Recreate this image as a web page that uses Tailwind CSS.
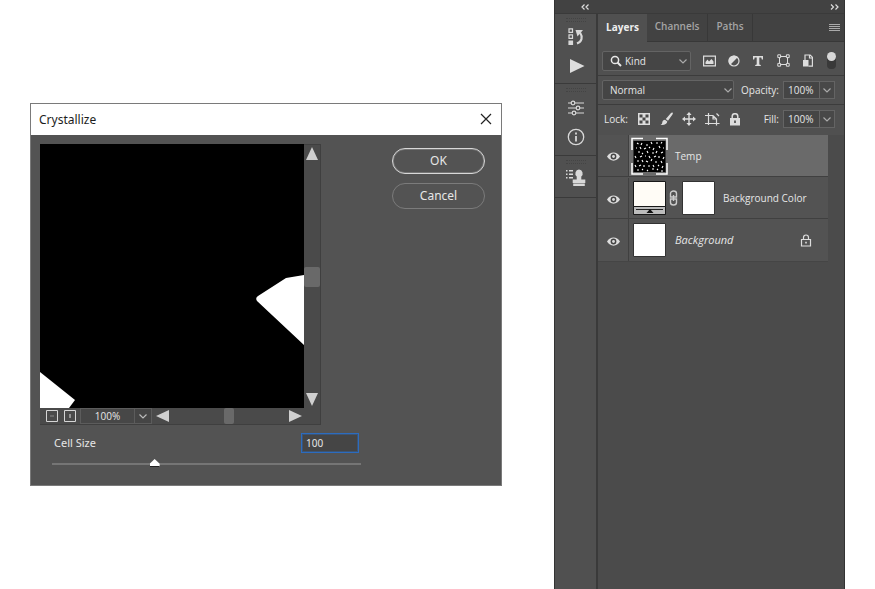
<!DOCTYPE html>
<html lang="en">
<head>
<meta charset="utf-8">
<title>Crystallize</title>
<script src="https://cdn.jsdelivr.net/npm/@tailwindcss/browser@4"></script>
</head>
<body class="bg-white font-['Open_Sans','Noto_Sans',sans-serif] text-[10px] text-[#e6e6e6]">
<main class="flex min-h-screen items-stretch gap-[52px] px-[30px]">

  <section aria-labelledby="dlg-title" class="mt-[103px] flex-1 self-start border border-[#7a7a7a] bg-[#535353]">
    <header class="flex h-[31px] items-center justify-between bg-white pl-2 pr-[9px] text-[#1c1c1c]">
      <h1 id="dlg-title" class="font-['Noto_Sans',sans-serif] text-xs">Crystallize</h1>
      <button type="button" aria-label="Close" class="pb-0.5"><svg class="block" width="12" height="12" viewBox="0 0 12 12" fill="none" stroke="#222" stroke-width="1.2"><path d="M1 1l10 10M11 1L1 11"/></svg></button>
    </header>
    <div class="flex gap-[31px] pb-4 pl-[9px] pr-4 pt-[9px]">
      <div class="min-w-0 flex-1">
        <div class="mr-10 border-b border-r border-[#3f3f3f] bg-[#4a4a4a]">
          <div class="flex">
            <svg class="block min-w-0 flex-1 bg-black" viewBox="0 0 264 264" role="img" aria-label="Preview"><path fill="#fff" d="M264 131l-18 3-28 18q-3 2-1 5l47 44zM0 228l35 28-6 8H0z"/></svg>
            <div class="flex w-4 flex-col items-center justify-between border-t border-[#3f3f3f] py-0.5">
              <button type="button" aria-label="Scroll up"><svg class="block" width="12" height="13"><path fill="#d0d0d0" d="M6 0l6 13H0z"/></svg></button>
              <div class="h-5 w-4 rounded-xs bg-[#696969]"></div>
              <button type="button" aria-label="Scroll down"><svg class="block" width="12" height="13"><path fill="#d0d0d0" d="M0 0h12L6 13z"/></svg></button>
            </div>
          </div>
          <div class="flex h-4 items-center">
            <button type="button" aria-label="Zoom out" class="ml-1.5"><svg class="block" width="12" height="12" fill="none" stroke="#d5d5d5"><path d="M.5.5h11v11H.5z"/><path stroke="#8a8a8a" d="M4 6h4"/></svg></button>
            <button type="button" aria-label="Zoom in" class="ml-1.5"><svg class="block" width="12" height="12" fill="none" stroke="#d5d5d5"><path d="M.5.5h11v11H.5z"/><path d="M6 4v4"/><path stroke="#999" d="M5 6h2"/></svg></button>
            <input aria-label="Zoom" value="100%" class="ml-1 h-4 w-[55px] border border-[#5c5c5c] bg-[#474747] text-center text-[10px] leading-none">
            <button type="button" aria-label="Zoom presets" class="flex h-4 w-[17px] items-center justify-center border border-l-0 border-[#5c5c5c] bg-[#454545]"><svg width="8" height="5" fill="none" stroke="#bbb" stroke-width="1.2"><path d="M.5.5L4 4 7.500.5"/></svg></button>
            <div class="flex flex-1 items-center justify-between pl-1 pr-[18px]">
              <button type="button" aria-label="Scroll left"><svg class="block" width="13" height="12"><path fill="#d0d0d0" d="M0 6l13-6v12z"/></svg></button>
              <div class="h-4 w-2.5 rounded-xs bg-[#696969]"></div>
              <button type="button" aria-label="Scroll right"><svg class="block" width="13" height="12"><path fill="#d0d0d0" d="M13 6L0 0v12z"/></svg></button>
            </div>
          </div>
        </div>
        <div class="mt-2 flex items-center justify-between pl-3.5 pr-0.5">
          <label for="cell" class="font-['Noto_Sans',sans-serif] text-[11px]">Cell Size</label>
          <input id="cell" value="100" class="h-5 w-[58px] border border-[#2c6cbf] bg-[#454545] px-1 font-['Noto_Sans',sans-serif] text-[10px] ring-1 ring-inset ring-[#2c6cbf]/40">
        </div>
        <input type="range" aria-label="Cell size" min="3" max="300" value="100" class="ml-3 mt-1.5 block h-2.5 w-[calc(100%-12px)] appearance-none bg-transparent [&::-webkit-slider-runnable-track]:h-0.5 [&::-webkit-slider-runnable-track]:bg-[#757575] [&::-webkit-slider-thumb]:-mt-1 [&::-webkit-slider-thumb]:h-2 [&::-webkit-slider-thumb]:w-2.5 [&::-webkit-slider-thumb]:appearance-none [&::-webkit-slider-thumb]:border-b [&::-webkit-slider-thumb]:border-[#222] [&::-webkit-slider-thumb]:bg-white [&::-webkit-slider-thumb]:[clip-path:polygon(50%_0,100%_60%,100%_100%,0_100%,0_60%)]">
      </div>
      <div class="flex w-[93px] flex-col gap-[9px] pt-1 font-['Noto_Sans',sans-serif] text-xs">
        <button type="button" class="h-[26px] rounded-full border border-[#d8d8d8] ring-1 ring-inset ring-white/20">OK</button>
        <button type="button" class="h-[26px] rounded-full border border-[#7b7b7b]">Cancel</button>
      </div>
    </div>
  </section>

  <aside class="flex w-[291px] flex-col border-x border-[#333] bg-[#3a3a3a]">
    <div class="flex h-[13px] items-center justify-between bg-[#424242] pl-[26px] pr-[5px]">
      <button type="button" aria-label="Expand"><svg class="block" width="8" height="6" fill="none" stroke="#ddd" stroke-width="1.2"><path d="M3.500.5L1 3l2.500 2.500M7.500.5L5 3l2.500 2.500"/></svg></button>
      <button type="button" aria-label="Collapse"><svg class="block" width="9" height="6" fill="none" stroke="#ddd" stroke-width="1.200"><path d="M1 .5L3.500 3 1 5.500M5.500.5L8 3 5.500 5.500"/></svg></button>
    </div>
    <div class="flex flex-1 gap-0.5 pt-px">
      <nav aria-label="Panels" class="flex w-[41px] flex-col bg-[#505050]">
        <div class="flex h-[70px] flex-col items-center gap-1.5 border-b border-[#3a3a3a] pt-1">
          <div class="h-1 w-5 border-y border-dotted border-[#444]"></div>
          <button type="button" aria-label="History"><svg class="block" width="18" height="18" fill="none" stroke="#d8d8d8" stroke-width="1.2"><path d="M2 .8h3.500v3.500H2zM2 6.800h3.500v3.500H2z"/><path fill="#d8d8d8" d="M2 13h3.500v3.500H2z"/><path stroke-width="2.200" d="M10 15.500c5-2 6-6.500 3-11"/><path fill="#d8d8d8" stroke="none" d="M8.500 2H16l-5.500 6.500z"/></svg></button>
          <button type="button" aria-label="Actions" class="ml-0.5 mt-1.5"><svg class="block" width="16" height="16"><path fill="#dedede" d="M1 1l14.500 7L1 15z"/></svg></button>
        </div>
        <div class="flex h-[72px] flex-col items-center border-b border-[#3a3a3a] pt-1">
          <div class="mb-[7px] h-1 w-5 border-y border-dotted border-[#444]"></div>
          <button type="button" aria-label="Properties"><svg class="block" width="18" height="18" fill="none" stroke="#d8d8d8" stroke-width="1.2"><path d="M1 4h3M8 4h9M1 9h8M13 9h4M1 14h4M9 14h8"/><circle cx="6" cy="4" r="1.800"/><circle cx="11" cy="9" r="1.800"/><circle cx="7" cy="14" r="1.800"/></svg></button>
          <button type="button" aria-label="Info" class="mt-[11px]"><svg class="block" width="18" height="18" fill="none" stroke="#d8d8d8" stroke-width="1.300"><circle cx="9" cy="9" r="7.700"/><path stroke-width="1.800" d="M9 8v5.500M9 4.500v2"/></svg></button>
        </div>
        <div class="flex h-[42px] flex-col items-center border-b border-[#3a3a3a] pt-1">
          <div class="mb-1 h-1 w-5 border-y border-dotted border-[#444]"></div>
          <button type="button" aria-label="Clone source"><svg class="block" width="22" height="20" fill="#d8d8d8"><path d="M1 2h1.500v1.500H1zM4 2h4v1.500H4zM1 5.500h1.500V7H1zM4 5.500h4V7H4zM1 9h1.500v1.500H1zM4 9h4v1.500H4z"/><path d="M14 1.500a4 4 0 0 1 2.300 7v3h4V15H7.700v-3.500h4v-3a4 4 0 0 1 2.300-7zM8.200 15.500h11.600V18H8.200z"/></svg></button>
        </div>
      </nav>

      <section aria-label="Layers" class="flex min-w-0 flex-1 flex-col bg-[#505050]">
        <div role="tablist" class="flex h-7 items-stretch bg-[#424242] font-semibold text-[#a5a5a5]">
          <button type="button" role="tab" aria-selected="true" class="w-[49px] bg-[#505050] pb-0.5 font-bold text-[#eee]">Layers</button>
          <button type="button" role="tab" class="w-[61px] border-b border-r border-[#383838] pb-0.5">Channels</button>
          <button type="button" role="tab" class="w-[45px] border-b border-r border-[#383838] pb-0.5">Paths</button>
          <button type="button" aria-label="Panel menu" class="flex flex-1 items-center justify-end border-b border-[#383838] pr-1"><svg width="11" height="8" stroke="#aaa"><path d="M0 .5h11M0 2.500h11M0 4.500h11M0 6.500h11"/></svg></button>
        </div>

        <div class="flex h-[34px] items-center border-b border-[#3c3c3c] pl-1 pr-[7px] pt-1">
          <div class="relative w-[89px]">
            <svg class="pointer-events-none absolute left-2 top-1 z-10" width="12" height="12" fill="none" stroke="#e8e8e8" stroke-width="1.500"><circle cx="5" cy="5" r="3.600"/><path stroke-width="2" d="M7.500 7.500L11 11"/></svg>
            <select aria-label="Filter" class="block h-5 w-full appearance-none rounded-xs border border-[#646464] bg-[#454545] pl-[22px] font-medium leading-none"><option>Kind</option></select>
            <svg class="pointer-events-none absolute right-1 top-2" width="8" height="5" fill="none" stroke="#aaa" stroke-width="1.200"><path d="M.5.5L4 4 7.500.5"/></svg>
          </div>
          <div class="flex flex-1 items-center justify-between pl-3">
            <button type="button" aria-label="Pixel layers"><svg class="block" width="13" height="12" fill="none" stroke="#ddd" stroke-width="1.200"><path d="M.6 1.200h11.800v9.600H.6z"/><path fill="#ddd" stroke="none" d="M2.500 9V7l2-2.500L6 6.500 8.500 4l2 2.500V9z"/></svg></button>
            <button type="button" aria-label="Adjustment layers"><svg class="block" width="12" height="12"><circle cx="6" cy="6" r="5" fill="none" stroke="#ddd" stroke-width="1.200"/><path fill="#ddd" d="M9.900 2.100A5.500 5.500 0 0 0 2.100 9.900z"/></svg></button>
            <button type="button" aria-label="Type layers"><svg class="block" width="12" height="12" fill="#ddd"><path d="M1 1h10v3.500H9.800L9.300 2.600H7.300v7l1.500.4v1H3.200v-1l1.500-.4v-7H2.700l-.5 1.900H1z"/></svg></button>
            <button type="button" aria-label="Shape layers"><svg class="block" width="13" height="13" fill="none" stroke="#ddd"><path d="M2.500 2.500h8v8h-8z"/><path fill="#505050" d="M.8.8h2.800v2.800H.8zM9.400.8h2.800v2.800H9.400zM.8 9.400h2.800v2.800H.8zM9.400 9.400h2.800v2.800H9.400z"/></svg></button>
            <button type="button" aria-label="Smart objects"><svg class="block" width="12" height="13"><path fill="none" stroke="#ddd" stroke-width="1.200" d="M3 6V1h5.200l2.200 2.200v9H6.500M7.500 1v3h3"/><path fill="#ddd" d="M1 6h5.500v6.500H1z"/></svg></button>
            <button type="button" aria-label="Toggle filter"><svg class="block" width="11" height="20"><rect x="1" y="2" width="9" height="16" rx="4" fill="#393939"/><circle cx="5.500" cy="5.500" r="4.500" fill="#d8d8d8"/></svg></button>
          </div>
        </div>

        <div class="flex h-[29px] items-center border-b border-[#3c3c3c] pl-1 pr-[9px]">
          <div class="relative flex-1">
            <select aria-label="Blend mode" class="block h-5 w-full appearance-none rounded-xs border border-[#646464] bg-[#454545] pl-[7px] font-medium leading-none"><option>Normal</option></select>
            <svg class="pointer-events-none absolute right-0.5 top-2" width="8" height="5" fill="none" stroke="#aaa" stroke-width="1.200"><path d="M.5.5L4 4 7.500.5"/></svg>
          </div>
          <label for="opacity" class="w-[49px] pr-1 text-right font-medium">Opacity:</label>
          <input id="opacity" value="100%" class="h-[18px] w-[37px] border border-[#646464] bg-[#454545] px-1 font-medium leading-none">
          <button type="button" aria-label="Opacity slider" class="flex h-[18px] w-[15px] items-center justify-center border border-l-0 border-[#646464] bg-[#484848]"><svg width="8" height="5" fill="none" stroke="#aaa" stroke-width="1.200"><path d="M.5.5L4 4 7.500.5"/></svg></button>
        </div>

        <div class="flex h-[30px] items-center pb-0.5 pl-1.5 pr-[9px] font-medium">
          <span class="w-[34px]">Lock:</span>
          <div class="flex items-center gap-[9px]">
            <button type="button" aria-label="Lock transparent pixels"><svg class="block" width="12" height="12"><path fill="#ddd" d="M0 0h12v12H0z"/><path fill="#484848" d="M1.500 1.500h3v3h-3zM7.500 1.500h3v3h-3zM4.500 4.500h3v3h-3zM1.500 7.500h3v3h-3zM7.500 7.500h3v3h-3z"/></svg></button>
            <button type="button" aria-label="Lock image pixels"><svg class="block" width="14" height="14" fill="#ddd"><path d="M13.500.5c.7.600.3 1.500-.2 2.200L9 8.700 6.800 7 12 1.100c.5-.6 1-.9 1.500-.6zM6 7.700l2.300 1.800C8 12 5.500 13.500 1.500 13c2-1 1.500-2 2-3.500.4-1 1.300-1.800 2.500-1.800z"/></svg></button>
            <button type="button" aria-label="Lock position"><svg class="block" width="14" height="14" fill="#ddd"><path d="M7 0l2.600 3H7.700v3.300H11V4.400L14 7l-3 2.600V7.700H7.700V11h1.900L7 14l-2.600-3h1.900V7.700H3v1.900L0 7l3-2.600v1.900h3.300V3H4.400z"/></svg></button>
            <button type="button" aria-label="Prevent nesting"><svg class="block" width="15" height="14" fill="none" stroke="#ddd" stroke-width="1.200"><path d="M3.500 1v12M0 3.500h8l3.500 3.500v6.500M0 11.500h14.500M8 3.500V7h3.500M11.500 1.500l2.500 2.500"/></svg></button>
            <button type="button" aria-label="Lock all"><svg class="block" width="12" height="13"><path fill="#ddd" d="M1 5h10v7.500H1z"/><path fill="none" stroke="#ddd" stroke-width="1.500" d="M3.200 5V3.500a2.800 2.800 0 0 1 5.600 0V5"/><path fill="#444" d="M5.200 7.500h1.600V10H5.200z"/></svg></button>
          </div>
          <label for="fill" class="flex-1 pr-1 text-right">Fill:</label>
          <input id="fill" value="100%" class="h-[18px] w-[37px] border border-[#646464] bg-[#454545] px-1 leading-none">
          <button type="button" aria-label="Fill slider" class="flex h-[18px] w-[15px] items-center justify-center border border-l-0 border-[#646464] bg-[#484848]"><svg width="8" height="5" fill="none" stroke="#aaa" stroke-width="1.200"><path d="M.5.5L4 4 7.500.5"/></svg></button>
        </div>

        <div class="flex-1 bg-[#4b4b4b] pr-4 font-medium">
          <ul>
            <li class="flex h-[42px] items-center border-b border-[#404040] bg-[#535353]">
              <button type="button" aria-label="Toggle Temp" class="flex h-full w-[31px] items-center justify-center border-r border-[#404040] pt-0.5"><svg width="13" height="9"><path fill="#ddd" d="M0 4.500C3-1 10-1 13 4.500 10 10 3 10 0 4.500z"/><circle cx="6.500" cy="4.500" r="2.900" fill="#444"/><circle cx="6.500" cy="4.500" r="1.400" fill="#ddd"/></svg></button>
              <div class="flex h-full flex-1 items-center gap-[7px] bg-[#6a6a6a] pl-0.5 pt-px">
                <svg width="37" height="38" role="img" aria-label="Temp thumbnail"><path fill="#000" d="M2.500 4h32v31h-32z"/><path fill="none" stroke="#fff" stroke-width="1.500" d="M1 13V1.500h11M25 1.500h11V13M36 26v11H25M12 37H1V26"/><path stroke="#fff" stroke-width="1.100" d="M6 6l1.500 1M11 6l-1 2M15 8h2M20 5l1 2M25 6h2M31 5l-1 1.500M5 11h1M9 10l1 2M13 12l2-1M18 10l1 1M23 11l-1 2M28 9l1 2M32 11h1M7 15h2M12 16l-1 1M16 14l1 2M21 16h2M26 14l-1 2M30 16l2-1M4 19l1 2M9 20l2-1M14 19h1M18 19l1 2M23 20l2-1M28 19v2M33 20l-1 2M6 24h2M11 23l1 2M15 24l2 1M20 24l1-2M24 25h2M30 24l1 2M4 28l1 2M8 29l2-1M13 28v2M17 29h2M22 28l1 2M27 29l1-1M32 29l-1 2M6 33h2M11 33l1-1M16 33l1 1M21 32h2M26 33l1-1M30 34h2"/></svg>
                <span>Temp</span>
              </div>
            </li>
            <li class="flex h-[42px] items-center border-b border-[#404040] bg-[#535353] pt-px">
              <button type="button" aria-label="Toggle Background Color" class="flex h-full w-[31px] items-center justify-center border-r border-[#404040] pt-0.5"><svg width="13" height="9"><path fill="#ddd" d="M0 4.500C3-1 10-1 13 4.500 10 10 3 10 0 4.500z"/><circle cx="6.500" cy="4.500" r="2.900" fill="#444"/><circle cx="6.500" cy="4.500" r="1.400" fill="#ddd"/></svg></button>
              <svg class="ml-1" width="33" height="34" role="img" aria-label="Color fill"><path fill="#fffcf6" stroke="#181818" d="M.5.5h32v33H.5z"/><path fill="#bcbcbc" stroke="#181818" d="M.5 25.500h32v8H.5z"/><path stroke="#222" d="M3 28.500h27"/><path fill="#111" d="M17 28l3.500 4h-7z"/></svg>
              <svg class="ml-[3px]" width="9" height="16" fill="none" stroke="#ccc" stroke-width="1.400"><path d="M1.500 7V3.500a3 2.500 0 0 1 6 0V7zM1.500 9v3.500a3 2.500 0 0 0 6 0V9zM4.500 5v6"/></svg>
              <svg class="ml-1" width="33" height="34" role="img" aria-label="Mask"><path fill="#fff" stroke="#333" d="M.5.5h32v33H.5z"/></svg>
              <span class="ml-2">Background Color</span>
            </li>
            <li class="flex h-[43px] items-center border-b border-[#454545] bg-[#535353]">
              <button type="button" aria-label="Toggle Background" class="flex h-full w-[31px] items-center justify-center border-r border-[#404040] pt-0.5"><svg width="13" height="9"><path fill="#ddd" d="M0 4.500C3-1 10-1 13 4.500 10 10 3 10 0 4.500z"/><circle cx="6.500" cy="4.500" r="2.900" fill="#444"/><circle cx="6.500" cy="4.500" r="1.400" fill="#ddd"/></svg></button>
              <svg class="ml-1" width="33" height="34" role="img" aria-label="Background thumbnail"><path fill="#fff" stroke="#333" d="M.5.5h32v33H.5z"/></svg>
              <span class="ml-[9px] flex-1 text-[11px] italic">Background</span>
              <svg class="mr-4" width="12" height="13" fill="none" stroke="#ddd" stroke-width="1.200"><path d="M1.500 5.500h9v6.500h-9zM3.500 5.500V3.500a2.500 2.500 0 0 1 5 0v2"/><path fill="#ddd" stroke="none" d="M5.200 7.800h1.600v1.800H5.200z"/></svg>
            </li>
          </ul>
        </div>
      </section>
    </div>
  </aside>
</main>
</body>
</html>
